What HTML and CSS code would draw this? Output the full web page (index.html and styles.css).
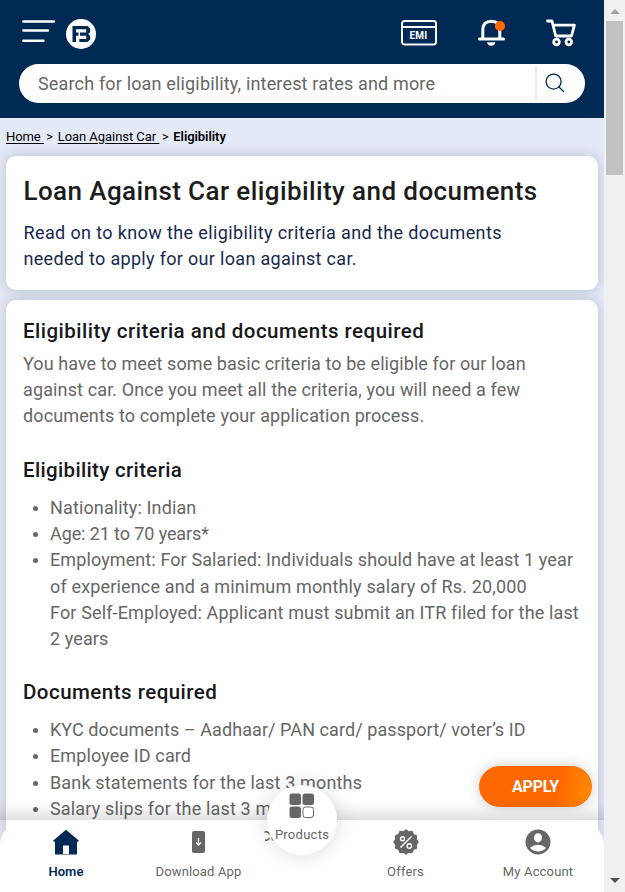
FILE: index.html
```
<!DOCTYPE html>
<html lang="en">
<head>
<meta charset="utf-8">
<title>Loan Against Car eligibility and documents</title>
<link rel="stylesheet" href="styles.css">
</head>
<body>
<div class="viewport">
  <div class="page">
    <header class="header">
      <div class="topbar">
        <svg class="menu" width="34" height="24" viewBox="0 0 34 24" fill="none" stroke="#fff" stroke-width="2.4" stroke-linecap="round"><path d="M1.3 1.5H32M1.3 10.5H26M1.3 20.7H21.5"/></svg>
        <svg class="logo" width="30" height="30" viewBox="0 0 30 30"><circle cx="15" cy="15" r="15" fill="#fff"/><path fill="#002953" d="M6.500 7H21.500L24.200 9.500V13L22.200 15L24.200 17V20.500L21.500 23H13.300V20H20.200V16.700H14V13.600H20.200V10.200H10V13.600H12.500V16.700H10V23H6.500Z"/></svg>
        <div class="actions">
          <svg width="36" height="26" viewBox="0 0 36 26"><rect x="1" y="1" width="34" height="23.500" rx="2.500" fill="none" stroke="#fff" stroke-width="1.900"/><path d="M1 7H35" stroke="#fff" stroke-width="2"/><text class="emi" x="17.500" y="18.800">EMI</text></svg>
          <svg class="bell" width="28" height="28" viewBox="0 0 28 28"><path d="M1.500 20H25.500M4.800 19.500V11Q4.800 2.200 13.300 2.200T21.800 11V19.500" fill="none" stroke="#fff" stroke-width="3" stroke-linecap="round"/><path d="M9 23.200H17.500Q16.500 26.800 13.200 26.800T9 23.200Z" fill="#fff"/><circle cx="22" cy="7" r="5.100" fill="#ff6801"/></svg>
          <svg class="cart" width="30" height="28" viewBox="0 0 30 28" fill="none" stroke="#fff" stroke-width="2.800" stroke-linejoin="round" stroke-linecap="round"><path d="M1.500 2H6L9.700 17H25.500L28.400 6.200H7"/><circle cx="10.500" cy="23" r="2.800"/><circle cx="22.800" cy="23" r="2.800"/></svg>
        </div>
      </div>
      <div class="search">
        <span class="query">Search for loan eligibility, interest rates and more</span>
        <span class="glass"><svg width="20" height="20" viewBox="0 0 20 20" fill="none" stroke="#002953" stroke-width="1.300" stroke-linecap="round"><circle cx="8.600" cy="8.600" r="7.500"/><path d="M14 14L18.500 18.500"/></svg></span>
      </div>
    </header>
    <nav class="crumbs"><a class="c-home">Home&nbsp;</a><span>&gt;</span><a>Loan Against Car&nbsp;</a><span>&gt;</span><b>Eligibility</b></nav>
    <section class="card intro">
      <h1>Loan Against Car eligibility and documents</h1>
      <p>Read on to know the eligibility criteria and the documents<br><span class="snug">needed to apply for our loan against car.</span></p>
    </section>
    <section class="card details">
      <h2>Eligibility criteria and documents required</h2>
      <p><span class="tight">You have to meet some basic criteria to be eligible for our loan</span><br>against car. Once you meet all the criteria, you will need a few<br>documents to complete your application process.</p>
      <h2 class="second short">Eligibility criteria</h2>
      <ul>
        <li>Nationality: Indian</li>
        <li class="tighter">Age: 21 to 70 years*</li>
        <li class="mid">Employment: For Salaried: Individuals should have at least 1 year<br><span class="loose">of experience and a minimum monthly salary of Rs. 20,000</span><br><span class="even">For Self-Employed: Applicant must submit an ITR filed for the last</span><br>2 years</li>
      </ul>
      <h2 class="second">Documents required</h2>
      <ul>
        <li class="tight">KYC documents – Aadhaar/ PAN card/ passport/ voter’s ID</li>
        <li>Employee ID card</li>
        <li class="loose">Bank statements for the last 3 months</li>
        <li class="loose">Salary slips for the last 3 months</li>
        <li>Registration certificate of car</li>
      </ul>
    </section>
    <a class="apply">APPLY</a>
    <nav class="tabs">
      <div class="side left">
        <a class="tab active"><svg width="26" height="26" viewBox="0 0 26 26"><path fill="#002953" fill-rule="evenodd" d="M13 .8L26 11.800L25 12.800H24V25.500H2V12.800H1L0 11.800ZM10 25V16.500H16V25Z"/></svg><span>Home</span></a>
        <a class="tab"><svg width="26" height="26" viewBox="0 0 26 26"><rect x="6" y="2" width="13" height="22" rx="2" fill="#666"/><path d="M12.500 9V16M10 13.500L12.500 16L15 13.500" fill="none" stroke="#fff" stroke-width="1.300"/></svg><span>Download App</span></a>
      </div>
      <div class="middle"><div class="products"><svg width="26" height="26" viewBox="0 0 26 26" fill="#666"><rect x=".5" y=".5" width="11.500" height="11.500" rx="2.500"/><rect x="13.500" y=".5" width="11.500" height="11.500" rx="2.500"/><rect x=".5" y="13.500" width="11.500" height="11.500" rx="2.500"/><rect x="14" y="14" width="10.500" height="10.500" rx="2.500" fill="#fff" stroke="#666"/></svg><span>Products</span></div></div>
      <div class="side right">
        <a class="tab"><svg width="26" height="26" viewBox="0 0 26 26"><path fill="#666" stroke="#666" stroke-width="1.500" stroke-linejoin="round" d="M13 1L15.700 3L19 2.600L20.300 5.700L23.400 7L23 10.300L25 13L23 15.700L23.400 19L20.300 20.300L19 23.400L15.700 23L13 25L10.300 23L7 23.400L5.700 20.300L2.600 19L3 15.700L1 13L3 10.300L2.600 7L5.700 5.700L7 2.600L10.300 3Z"/><g fill="none" stroke="#fff" stroke-width="1.400"><path d="M18.500 7.500L7.500 18.500"/><circle cx="9.500" cy="9.700" r="2"/><circle cx="16.300" cy="17" r="2.200"/></g></svg><span>Offers</span></a>
        <a class="tab"><svg width="26" height="26" viewBox="0 0 26 26"><circle cx="13" cy="13" r="12.500" fill="#666"/><ellipse cx="13" cy="8.800" rx="4" ry="4.600" fill="#fff"/><path d="M5 18.700Q8.500 15.700 13 15.700T21 18.700Q18 22.500 13 22.500T5 18.700Z" fill="#fff"/></svg><span>My Account</span></a>
      </div>
    </nav>
  </div>
  <div class="scrollbar"><i class="up"></i><i class="thumb"></i><i class="down"></i></div>
</div>
</body>
</html>
```
FILE: styles.css
```
* { box-sizing: border-box; }
body { margin: 0; font-family: Roboto, "Liberation Sans", sans-serif; }
svg { display: block; flex: none; }
.viewport { display: flex; width: 625px; height: 892px; overflow: hidden; }
.page { position: relative; width: 604px; height: 892px; overflow: hidden; background: #e4e9f6; }

.header { height: 118px; background: #002953; padding: 19px 19px 0; }
.topbar { display: flex; height: 45px; padding-left: 3px; }
.menu { margin-top: 1px; }
.logo { margin-left: 10px; }
.actions { display: flex; margin-left: auto; padding-right: 9px; margin-top: 1px; }
.bell { margin: -1px 0 0 41px; }
.cart { margin: -1px 0 0 40px; }
.emi { fill: #fff; font-size: 10px; font-weight: 700; text-anchor: middle; letter-spacing: .3px; }
.search { display: flex; align-items: center; width: 566px; height: 39px; border-radius: 20px; background: #fff; padding-left: 19px; }
.query { font-size: 18px; color: #666; letter-spacing: .164px; white-space: nowrap; }
.glass { margin-left: auto; width: 50px; height: 33px; padding: 6px 0 0 8px; border-left: 2px solid #e4e9f6; }

.crumbs { display: flex; height: 38px; padding: 0 6px 2px; align-items: center; font-size: 13px; color: #000; white-space: nowrap; }
.crumbs a { text-decoration: underline; text-underline-offset: 2px; letter-spacing: -.05px; }
.crumbs .c-home { letter-spacing: -.1px; }
.crumbs span { width: 14px; padding-right: 2px; text-align: center; }
.crumbs b { font-weight: 600; letter-spacing: -.06px; }

.card { margin: 0 6px 10px; border-radius: 10px; background: #fff; box-shadow: 0 0 14px rgba(30, 40, 70, .2); white-space: nowrap; }
.card p, .card h1, .card h2 { margin: 0; }
.intro { height: 134px; padding: 18px 17.5px 0; }
h1 { font-size: 26px; line-height: 34px; font-weight: 500; color: #1c1c1c; letter-spacing: .405px; }
.intro p { margin-top: 12px; font-size: 18px; line-height: 26.200px; letter-spacing: .375px; color: #17284f; }
.intro .snug { letter-spacing: .313px; }
.details { height: 700px; padding: 18px 17px 0; font-size: 18px; line-height: 26.200px; color: #666; letter-spacing: .13px; }
h2 { font-size: 20.500px; line-height: 26px; font-weight: 500; color: #17181b; letter-spacing: .48px; }
.details p { margin-top: 7px; }
.card h2.second { margin-top: 27.200px; }
h2.short { letter-spacing: .33px; }
.details ul { margin: 12.100px 0 0; padding-left: 27px; }
.card ul + h2.second { margin-top: 26.900px; }
.tighter { letter-spacing: -.102px; }
.tight { letter-spacing: .078px; }
.mid { letter-spacing: .104px; }
.loose { letter-spacing: .158px; }
.even { letter-spacing: .135px; }
li::marker { font-size: 16px; }

.apply { position: absolute; left: 479px; top: 766px; width: 113px; height: 41px; border-radius: 21px; background: linear-gradient(100deg, #ff6801 70%, #ff8a00 98%); border: 1px solid #ff6801; box-shadow: 0 0 14px rgba(0, 0, 0, .2); color: #fff; font-size: 16px; line-height: 39px; font-weight: 700; text-align: center; letter-spacing: -.2px; }

.tabs { position: absolute; left: 0; right: 0; bottom: 0; z-index: 0; height: 72px; display: grid; grid-template-columns: 265px 74px 265px; }
.tabs::before { content: ""; position: absolute; left: 0; right: 0; top: -22px; height: 22px; background: linear-gradient(transparent, rgba(0, 0, 0, .03) 45%, rgba(0, 0, 0, .12)); z-index: -1; }
.side { display: grid; grid-template-columns: 132px 133px; background: #fff; }
.left { border-radius: 26px 16px 0 0; }
.right { border-radius: 0 26px 0 0; }
.tab { display: flex; flex-direction: column; align-items: center; padding-top: 9px; gap: 8px; font-size: 13px; line-height: 17px; color: #666; letter-spacing: .16px; }
.right .tab { padding-left: 1px; }
.active { color: #002953; font-weight: 600; letter-spacing: 0; }
.middle { position: relative; z-index: 1; display: flex; justify-content: center; background: linear-gradient(transparent 24px, #fff 24px); }
.products { width: 70px; height: 70px; margin-top: -35px; padding-top: 8px; border-radius: 50%; background: #fff; box-shadow: 0 0 22px rgba(0, 0, 0, .14); display: flex; flex-direction: column; align-items: center; gap: 7px; font-size: 13px; line-height: 17px; color: #666; letter-spacing: .26px; }

.scrollbar { width: 21px; height: 892px; background: #f0f0f0; display: flex; flex-direction: column; align-items: center; }
.up, .down { width: 0; height: 0; border: 5px solid transparent; border-top-width: 0; border-bottom: 5px solid #a3a3a3; margin: 9px 0 7px; }
.thumb { width: 17px; height: 154px; background: #c1c1c1; }
.down { margin: auto 0 9px; border-bottom-width: 0; border-bottom-color: transparent; border-top: 5px solid #505050; }
```
